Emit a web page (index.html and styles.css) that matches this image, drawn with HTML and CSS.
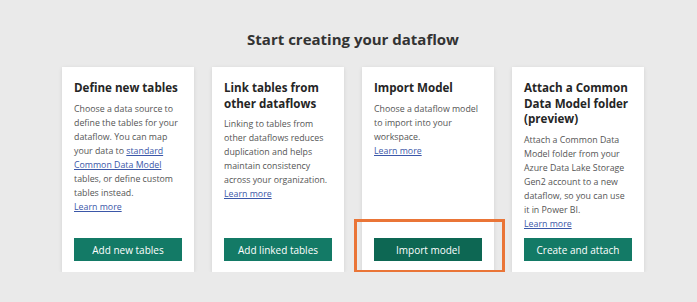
FILE: index.html
```html
<!DOCTYPE html>
<html lang="en">
<head>
  <meta charset="UTF-8" />
  <title>Start creating your dataflow</title>
  <link rel="stylesheet" href="styles.css">
</head>
<body>
  <h1>Start creating your dataflow</h1>
  <div class="cards">
    <div class="card">
      <h2>Define new tables</h2>
      <p>Choose a data source to define the tables for your dataflow. You can map your data to <a href="#">standard Common Data Model</a> tables, or define custom tables instead.<br><a href="#">Learn more</a></p>
      <button>Add new tables</button>
    </div>
    <div class="card">
      <h2>Link tables from other dataflows</h2>
      <p>Linking to tables from other dataflows reduces duplication and helps maintain consistency across your organization.<br><a href="#">Learn more</a></p>
      <button>Add linked tables</button>
    </div>
    <div class="card">
      <h2>Import Model</h2>
      <p>Choose a dataflow model to import into your workspace.<br><a href="#">Learn more</a></p>
      <button class="dark">Import model</button>
      <div class="highlight"></div>
    </div>
    <div class="card">
      <h2>Attach a Common Data Model folder (preview)</h2>
      <p>Attach a Common Data Model folder from your Azure Data Lake Storage Gen2 account to a new dataflow, so you can use it in Power BI.<br><a href="#">Learn more</a></p>
      <button>Create and attach</button>
    </div>
  </div>
</body>
</html>
```

FILE: styles.css
```css
* {
  box-sizing: border-box;
  margin: 0;
  padding: 0;
}

body {
  font-family: "Open Sans", "Noto Sans", sans-serif;
  background-color: #eaeaea;
  color: #252525;
  padding-top: 28px;
}

h1 {
  font-size: 15px;
  font-weight: 700;
  text-align: center;
  line-height: 22px;
  color: #333;
  margin-left: 9px;
}

.cards {
  display: flex;
  gap: 18px;
  margin: 17px 0 0 62px;
}

.card {
  position: relative;
  width: 132px;
  height: 205px;
  background: #fff;
  box-shadow: 0 1px 4px rgba(0, 0, 0, 0.1);
  padding: 13px 12px 11px;
  display: flex;
  flex-direction: column;
}

.card h2 {
  font-size: 11.6px;
  font-weight: 700;
  line-height: 15.5px;
  color: #252525;
  margin-bottom: 6px;
}

.card p {
  font-size: 8.8px;
  line-height: 14px;
  color: #555;
}

.card a {
  color: #3b57a8;
  text-decoration: underline;
}

button {
  margin-top: auto;
  width: 108px;
  height: 23px;
  border: none;
  background-color: #137a66;
  color: #fff;
  font-family: inherit;
  font-size: 10px;
}

button.dark {
  background-color: #0d6753;
}

.highlight {
  position: absolute;
  left: -8px;
  top: 152px;
  width: 151px;
  height: 54px;
  border: 3px solid #ea7537;
}
```
